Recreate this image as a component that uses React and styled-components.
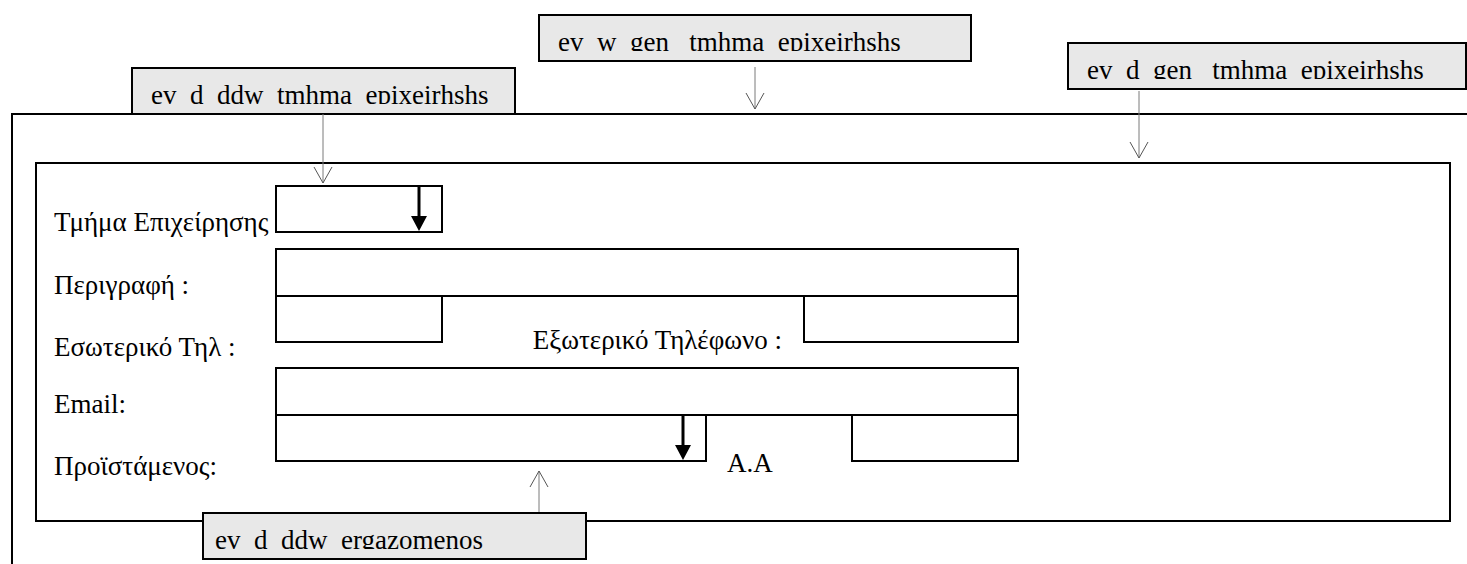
import React from 'react';
import styled, {createGlobalStyle} from 'styled-components';

const Global = createGlobalStyle`
body {
  margin: 0;
  background: #fff;
  font-family: 'Liberation Serif', 'Times New Roman', serif;
  color: #000;
}
`

const Canvas = styled.div`
position: relative;
width: 1467px;
height: 564px;
overflow: hidden;
background: #fff;
`

const Outer = styled.div`
box-sizing: border-box;
margin: 113px 0 0 11px;
height: 451px;
border-top: 2px solid #000;
border-left: 2px solid #000;
padding: 47px 0 0 22px;
`

const Panel = styled.div`
box-sizing: border-box;
width: 1416px;
height: 360px;
border: 2px solid #000;
padding: 21px 0 0 17px;
`

const Row = styled.div`
display: flex;
align-items: flex-start;
height: ${p => p.$h}px;
margin-top: ${p => p.$top || 0}px;
`

const Label = styled.div`
width: 221px;
flex-shrink: 0;
margin-top: ${p => p.$drop}px;
font-size: 27px;
line-height: 30px;
white-space: nowrap;
`

const Fields = styled.div`
display: flex;
align-items: flex-start;
width: 744px;
`

const Box = styled.div`
box-sizing: border-box;
flex-shrink: 0;
width: ${p => p.$w}px;
height: ${p => p.$h || 48}px;
border: 2px solid #000;
background: #fff;
margin-left: ${p => p.$push ? 'auto' : '0'};
`

const Dropdown = styled(Box)`
display: flex;
justify-content: flex-end;
padding-right: 14px;
`

const InlineLabel = styled.span`
margin-top: ${p => p.$drop}px;
margin-left: ${p => p.$push ? 'auto' : `${p.$left || 0}px`};
margin-right: ${p => p.$right || 0}px;
font-size: 27px;
line-height: 30px;
white-space: nowrap;
`

const Callout = styled.div`
position: absolute;
left: ${p => p.$x}px;
top: ${p => p.$y}px;
width: ${p => p.$w}px;
height: 48px;
box-sizing: border-box;
border: 2px solid #000;
background: #e8e8e8;
padding: 11px 0 0 ${p => p.$pad}px;
`

const CalloutText = styled.span`
display: block;
height: 24px;
overflow: hidden;
font-size: 27px;
line-height: 30px;
white-space: pre;
`

const PointerSvg = styled.svg`
position: absolute;
left: ${p => p.$x - 10}px;
top: ${p => p.$y}px;
overflow: visible;
`

function DropArrow() {
  return (
    <svg width="16" height="44" viewBox="0 0 16 44">
      <line x1="8" y1="0" x2="8" y2="30" stroke="#000" strokeWidth="3" />
      <polygon points="0,29 16,29 8,44" fill="#000" />
    </svg>
  )
}

function Pointer({x, from, to}) {
  const top = Math.min(from, to)
  const h = Math.abs(to - from)
  const down = to > from
  const head = down
    ? `1,${h - 16} 10,${h} 19,${h - 16}`
    : `1,16 10,0 19,16`
  return (
    <PointerSvg $x={x} $y={top} width="20" height={h}>
      <line x1="10" y1="0" x2="10" y2={h} stroke="#7a7a7a" strokeWidth="1" />
      <polyline points={head} fill="none" stroke="#555" strokeWidth="1" />
    </PointerSvg>
  )
}

export default function App() {
  return (
    <Canvas>
      <Global />
      <Outer>
        <Panel>
          <Row $h={48}>
            <Label $drop={22}>Τμήμα Επιχείρησης</Label>
            <Fields>
              <Dropdown $w={168}><DropArrow /></Dropdown>
            </Fields>
          </Row>

          <Row $h={49} $top={15}>
            <Label $drop={22}>Περιγραφή :</Label>
            <Fields>
              <Box $w={744} $h={49} />
            </Fields>
          </Row>

          <Row $h={48} $top={-2}>
            <Label $drop={37}>Εσωτερικό Τηλ :</Label>
            <Fields>
              <Box $w={168} />
              <InlineLabel $drop={30} $push $right={21}>Εξωτερικό Τηλέφωνο :</InlineLabel>
              <Box $w={216} />
            </Fields>
          </Row>

          <Row $h={49} $top={24}>
            <Label $drop={22}>Email:</Label>
            <Fields>
              <Box $w={744} $h={49} />
            </Fields>
          </Row>

          <Row $h={48} $top={-2}>
            <Label $drop={37}>Προϊστάμενος:</Label>
            <Fields>
              <Dropdown $w={432}><DropArrow /></Dropdown>
              <InlineLabel $drop={34} $left={20}>A.A</InlineLabel>
              <Box $w={168} $push />
            </Fields>
          </Row>
        </Panel>
      </Outer>

      <Callout $x={131} $y={67} $w={385} $pad={18}>
        <CalloutText>{'ev  d  ddw  tmhma  epixeirhshs'}</CalloutText>
      </Callout>
      <Callout $x={538} $y={14} $w={434} $pad={18}>
        <CalloutText>{'ev  w  gen   tmhma  epixeirhshs'}</CalloutText>
      </Callout>
      <Callout $x={1067} $y={42} $w={400} $pad={18}>
        <CalloutText>{'ev  d  gen   tmhma  epixeirhshs'}</CalloutText>
      </Callout>
      <Callout $x={202} $y={512} $w={385} $pad={11}>
        <CalloutText>{'ev  d  ddw  ergazomenos'}</CalloutText>
      </Callout>

      <Pointer x={323} from={114} to={183} />
      <Pointer x={755} from={67} to={109} />
      <Pointer x={1139} from={91} to={158} />
      <Pointer x={539} from={512} to={471} />
    </Canvas>
  )
}
